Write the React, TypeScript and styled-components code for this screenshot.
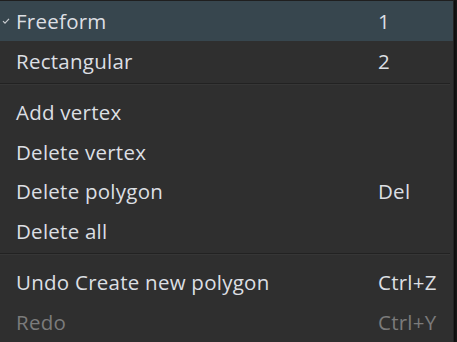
import React from "react";
import styled, { createGlobalStyle } from "styled-components";

const GlobalStyle = createGlobalStyle`
  html, body {
    margin: 0;
    padding: 0;
    background: #1c1c1c;
  }
  body {
    width: 457px;
    height: 342px;
    overflow: hidden;
  }
`;

const Menu = styled.div`
  width: 453px;
  height: 341px;
  background: #2f2f2f;
  border-top: 1px solid #1f1f1f;
  border-right: 1px solid #232323;
  box-shadow: 2px 0 2px rgba(0, 0, 0, 0.5);
  font-family: "Open Sans", "Noto Sans", sans-serif;
  display: flex;
  flex-direction: column;
  overflow: hidden;
`;

const Item = styled.div<{ $selected?: boolean; $disabled?: boolean }>`
  position: relative;
  display: grid;
  grid-template-columns: 362px 1fr;
  align-items: center;
  height: 40px;
  padding-left: 16px;
  font-size: 20.5px;
  letter-spacing: 0.25px;
  color: ${({ $disabled }) => ($disabled ? "#7b7b7b" : "#dcdfe3")};
  background: ${({ $selected }) => ($selected ? "#37464e" : "transparent")};
`;

const Label = styled.span`
  white-space: nowrap;
`;

const Shortcut = styled.span`
  white-space: nowrap;
`;

const Check = styled.svg`
  position: absolute;
  left: 2px;
  top: 16px;
  width: 8px;
  height: 8px;
`;

const Separator = styled.div`
  height: 1px;
  margin: 2px 3px 7px 0;
  background: #222222;
  border-bottom: 1px solid #363636;
`;

type Entry =
  | { sep: true }
  | {
      sep?: false;
      label: string;
      shortcut?: string;
      checked?: boolean;
      selected?: boolean;
      disabled?: boolean;
    };

const entries: Entry[] = [
  { label: "Freeform", shortcut: "1", checked: true, selected: true },
  { label: "Rectangular", shortcut: "2" },
  { sep: true },
  { label: "Add vertex" },
  { label: "Delete vertex" },
  { label: "Delete polygon", shortcut: "Del" },
  { label: "Delete all" },
  { sep: true },
  { label: "Undo Create new polygon", shortcut: "Ctrl+Z" },
  { label: "Redo", shortcut: "Ctrl+Y", disabled: true },
];

export default function App() {
  return (
    <>
      <GlobalStyle />
      <Menu>
        {entries.map((e, i) =>
          e.sep ? (
            <Separator key={i} />
          ) : (
            <Item key={i} $selected={e.selected} $disabled={e.disabled}>
              {e.checked && (
                <Check viewBox="0 0 8 8">
                  <path
                    d="M1 4.2 L3 6.2 L7 1.8"
                    fill="none"
                    stroke="#c9ccd0"
                    strokeWidth="1.2"
                  />
                </Check>
              )}
              <Label>{e.label}</Label>
              <Shortcut>{e.shortcut}</Shortcut>
            </Item>
          )
        )}
      </Menu>
    </>
  );
}
